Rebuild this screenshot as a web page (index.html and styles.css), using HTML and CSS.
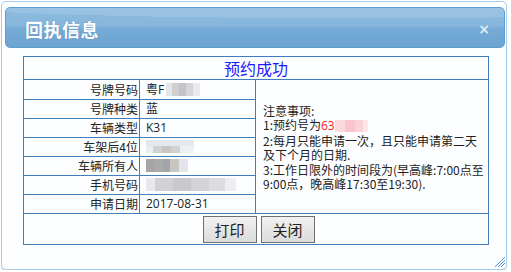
FILE: index.html
```html
<!DOCTYPE html>
<html>
<head>
<meta charset="utf-8">
<link rel="stylesheet" href="styles.css">
</head>
<body>
<div class="window">
  <div class="titlebar">
    <span class="title">回执信息</span>
    <span class="close">×</span>
  </div>
  <table class="receipt">
    <colgroup><col class="c1"><col class="c2"><col class="c3"></colgroup>
    <tr><td colspan="3" class="head">预约成功</td></tr>
    <tr class="first"><td class="lbl">号牌号码</td><td class="val">粤F<span class="blur b1"></span></td>
      <td rowspan="7" class="notes">注意事项:<br>1:预约号为<span class="red">63</span><span class="blur pink"></span><br>2:每月只能申请一次，且只能申请第二天及下个月的日期.<br>3:工作日限外的时间段为(早高峰:7:00点至9:00点，晚高峰17:30至19:30).</td></tr>
    <tr><td class="lbl">号牌种类</td><td class="val">蓝</td></tr>
    <tr><td class="lbl">车辆类型</td><td class="val">K31</td></tr>
    <tr><td class="lbl">车架后4位</td><td class="val"><span class="blur b2"></span></td></tr>
    <tr><td class="lbl">车辆所有人</td><td class="val"><span class="blur b3"></span></td></tr>
    <tr><td class="lbl">手机号码</td><td class="val"><span class="blur b4"></span></td></tr>
    <tr><td class="lbl">申请日期</td><td class="val">2017-08-31</td></tr>
    <tr><td colspan="3" class="actions"><button class="btn">打印</button><button class="btn">关闭</button></td></tr>
  </table>
  <svg class="grip" width="12" height="12" viewBox="0 0 12 12">
    <g fill="#4f8fcf">
      <rect x="10" y="1" width="1" height="1"/><rect x="9" y="2" width="1" height="1"/><rect x="8" y="3" width="1" height="1"/><rect x="7" y="4" width="1" height="1"/><rect x="6" y="5" width="1" height="1"/><rect x="5" y="6" width="1" height="1"/><rect x="4" y="7" width="1" height="1"/><rect x="3" y="8" width="1" height="1"/><rect x="2" y="9" width="1" height="1"/><rect x="1" y="10" width="1" height="1"/>
      <rect x="10" y="4" width="1" height="1"/><rect x="9" y="5" width="1" height="1"/><rect x="8" y="6" width="1" height="1"/><rect x="7" y="7" width="1" height="1"/><rect x="6" y="8" width="1" height="1"/><rect x="5" y="9" width="1" height="1"/><rect x="4" y="10" width="1" height="1"/>
      <rect x="10" y="7" width="1" height="1"/><rect x="9" y="8" width="1" height="1"/><rect x="8" y="9" width="1" height="1"/><rect x="7" y="10" width="1" height="1"/>
    </g>
  </svg>
</div>
</body>
</html>
```
FILE: styles.css
```css
html, body {
  margin: 0;
  padding: 0;
  background: #ffffff;
}
body {
  font-family: "Open Sans", "Noto Sans CJK SC", sans-serif;
  color: #222;
}
.window {
  position: relative;
  box-sizing: border-box;
  width: 506px;
  height: 269px;
  margin: 1px 0 0 1px;
  padding: 5px 1px 0 3px;
  border: 1px solid #a9cbe8;
  border-radius: 5px;
  background: #fdfeff;
  box-shadow: 0 2px 1px #e2e2e2;
}
.titlebar {
  box-sizing: border-box;
  height: 41px;
  display: flex;
  align-items: center;
  justify-content: space-between;
  padding: 0 14px 0 19px;
  border: 1px solid #5e9fd3;
  border-radius: 5px;
  background:
    radial-gradient(ellipse 140% 60% at 70% -10%, rgba(255,255,255,0.12) 60%, rgba(255,255,255,0) 61%),
    linear-gradient(#8dbbdf, #86b6dc 45%, #74aad5 55%, #6da4d2);
}
.title {
  font-family: "Noto Sans CJK SC", sans-serif;
  font-size: 18px;
  font-weight: bold;
  color: #ffffff;
  text-shadow: 0 0 1px rgba(40,80,130,0.5);
  letter-spacing: 0.5px;
  margin-top: 2px;
}
.close {
  font-family: "DejaVu Sans", sans-serif;
  font-size: 14px;
  font-weight: bold;
  color: #dde9f5;
  margin-top: 2px;
}
.receipt {
  margin: 8px 0 0 18px;
  width: 465px;
  border-collapse: collapse;
  table-layout: fixed;
  font-family: "Open Sans", "Noto Sans CJK SC", sans-serif;
  font-size: 12px;
}
.c1 { width: 116px; }
.c2 { width: 116px; }
.c3 { width: 233px; }
.receipt td {
  border: 1px solid #3f7fbf;
  padding: 0;
  height: 18px;
  line-height: 16px;
  white-space: nowrap;
}
.receipt td.head {
  height: 22px;
  text-align: center;
  font-family: "Noto Sans CJK SC", sans-serif;
  font-size: 16px;
  color: #1a1aff;
  line-height: 20px;
}
.receipt tr.first td { height: 19px; }
.receipt td.lbl {
  text-align: right;
  padding-right: 1px;
  font-family: "Noto Sans CJK SC", sans-serif;
}
.receipt td.val {
  padding-left: 6px;
}
.receipt td.notes {
  white-space: normal;
  vertical-align: middle;
  padding: 2px 2px 0 7px;
  line-height: 14.5px;
  font-family: "Noto Sans CJK SC", sans-serif;
  word-break: break-all;
}
.red { color: #ff1a1a; font-family: "Open Sans", sans-serif; }
.receipt td.actions {
  height: 30px;
  text-align: center;
  padding-left: 5px;
}
.btn {
  box-sizing: border-box;
  width: 54px;
  height: 27px;
  margin: 0 2px;
  padding: 0;
  border: 1px solid #707070;
  border-radius: 0;
  background: linear-gradient(#f2f2f2, #e6e6e6 50%, #dcdcdc);
  font-family: "Noto Sans CJK SC", sans-serif;
  font-size: 15px;
  color: #222;
  vertical-align: middle;
}
.blur {
  display: inline-block;
  vertical-align: middle;
  height: 13px;
  margin-top: -2px;
}
.b1 {
  width: 34px;
  margin-left: 2px;
  background:
    linear-gradient(90deg, #e4e6ea 0 18%, #cfcfd2 18% 38%, #c4c4c6 38% 58%, #d6d6d8 58% 80%, #e8eaee 80%);
}
.b2 {
  width: 48px;
  background:
    linear-gradient(#e4e8ee 0 45%, transparent 45%),
    linear-gradient(90deg, #eceef1 0 14%, #d2d2d4 14% 34%, #cbc6c4 34% 52%, #cfd1d3 52% 70%, #eef0f3 70%);
}
.b3 {
  width: 42px;
  background:
    linear-gradient(90deg, #a9a4a4 0 20%, #aaaaad 20% 40%, #a2a6aa 40% 58%, #c9c6c2 58% 78%, #e2e6ec 78%);
}
.b4 {
  width: 90px;
  background:
    linear-gradient(90deg, #e8e9ec 0 10%, #d2d2d4 10% 30%, #c9c9cb 30% 50%, #d4d4d6 50% 70%, #dcdcde 70% 88%, #eceef1 88%);
}
.pink {
  width: 33px;
  height: 12px;
  background: linear-gradient(90deg, #fbd8dc 0 30%, #f7c5cb 30% 60%, #fbd3d7 60% 85%, #fde6e8 85%);
}
.grip {
  position: absolute;
  right: 0;
  bottom: 1px;
}
```
